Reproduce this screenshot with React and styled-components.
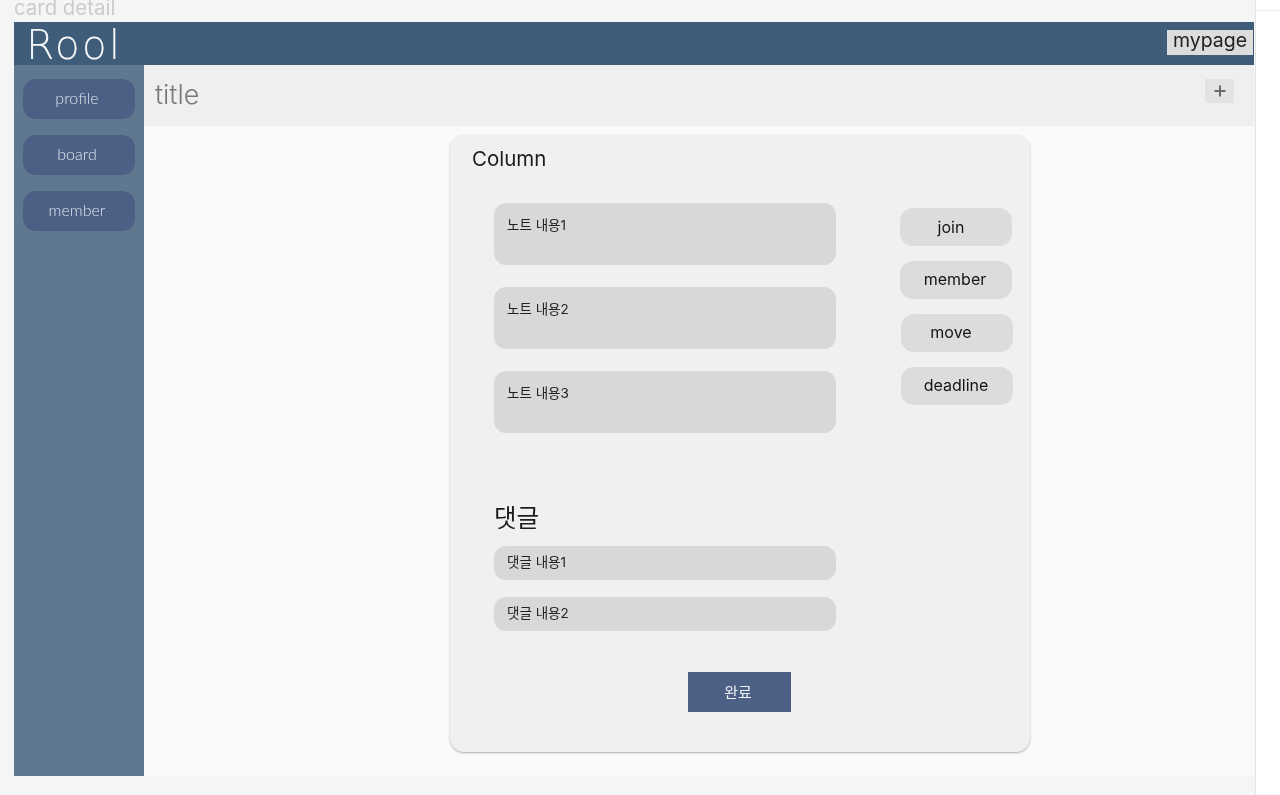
import React from "react";
import styled, { createGlobalStyle } from "styled-components";

const GlobalStyle = createGlobalStyle`
  html, body {
    margin: 0;
    padding: 0;
    height: 100%;
    overflow: hidden;
    background: #f5f5f5;
    font-family: Inter, "Noto Sans CJK KR", sans-serif;
  }
`;

// the reference is a soft, upscaled capture
const Page = styled.div`
  display: flex;
  width: 1280px;
  height: 795px;
  filter: blur(0.45px);
`;

const Canvas = styled.div`
  width: 1255px;
  padding-left: 14px;
  box-sizing: border-box;
  background: #f5f5f5;
`;

const Strip = styled.div`
  flex: 1;
  background: #fff;
  border-left: 1px solid #e4e4e4;
`;

const StripLine = styled.div`
  height: 10px;
  border-bottom: 1px solid #ececec;
`;

const FrameLabel = styled.div`
  height: 22px;
  font-size: 20.4px;
  line-height: 16px;
  color: #cbcbcb;
`;

const Frame = styled.div`
  width: 1240px;
  height: 754px;
  display: flex;
  flex-direction: column;
  background: #fafafa;
`;

const Header = styled.header`
  height: 43px;
  display: flex;
  align-items: center;
  justify-content: space-between;
  padding: 0 1px 0 12px;
  background: #3f5c78;
`;

const Logo = styled.div`
  padding-top: 3px;
  font-family: "DejaVu Sans", sans-serif;
  font-weight: 200;
  font-size: 41px;
  letter-spacing: 2px;
  line-height: 40px;
  color: #f4f6f8;
`;

const MyPage = styled.button`
  width: 86px;
  height: 25px;
  margin-bottom: 3px;
  padding: 0 0 4px;
  border: none;
  background: #dcdcdc;
  color: #222;
  font-family: Inter, sans-serif;
  font-size: 19.5px;
  line-height: 21px;
`;

const Body = styled.div`
  flex: 1;
  display: flex;
  min-height: 0;
`;

const Sidebar = styled.nav`
  width: 130px;
  display: flex;
  flex-direction: column;
  gap: 16px;
  padding: 14px 9px 0;
  box-sizing: border-box;
  background: #60788f;
`;

const SideButton = styled.div`
  height: 40px;
  padding: 0 4px 3px 0;
  box-sizing: border-box;
  display: flex;
  align-items: center;
  justify-content: center;
  border-radius: 13px;
  background: #4c5f85;
  color: #dfe4ec;
  font-family: Lato, sans-serif;
  font-weight: 300;
  font-size: 16px;
`;

const Main = styled.main`
  flex: 1;
  display: flex;
  flex-direction: column;
`;

const TitleBar = styled.div`
  height: 61px;
  display: flex;
  align-items: center;
  justify-content: space-between;
  padding: 0 20px 3px 11px;
  box-sizing: border-box;
  background: #efefef;
`;

const Title = styled.h1`
  margin: 0;
  font-size: 27px;
  font-weight: 300;
  color: #7a7a7a;
`;

const AddButton = styled.button`
  width: 29px;
  height: 24px;
  margin-bottom: 6px;
  padding: 0;
  border: none;
  display: flex;
  align-items: center;
  justify-content: center;
  background: #e3e3e3;
  color: #6a6a6a;
`;

const CardArea = styled.div`
  flex: 1;
  display: flex;
  padding: 9px 0 0 306px;
`;

const Card = styled.section`
  width: 580px;
  height: 617px;
  box-sizing: border-box;
  padding: 12px 17px 0 22px;
  border-radius: 14px;
  background: #f0f0f0;
  box-shadow: 0 1px 2px rgba(0, 0, 0, 0.3);
`;

const ColumnName = styled.div`
  font-size: 20.5px;
  line-height: 24px;
  color: #1c1c1c;
`;

const CardBody = styled.div`
  display: flex;
  justify-content: space-between;
  margin-top: 32px;
`;

const Left = styled.div`
  width: 342px;
  margin-left: 22px;
  display: flex;
  flex-direction: column;
`;

const Notes = styled.div`
  display: flex;
  flex-direction: column;
  gap: 22px;
`;

const Note = styled.div`
  height: 62px;
  box-sizing: border-box;
  padding: 12px 13px;
  border-radius: 12px;
  background: #d8d8d8;
  color: #222;
  font-size: 13.5px;
  line-height: 20px;
`;

const CommentHeading = styled.h2`
  margin: 67px 0 10px;
  font-size: 24.5px;
  font-weight: 400;
  line-height: 36px;
  color: #1c1c1c;
`;

const Comments = styled.div`
  display: flex;
  flex-direction: column;
  gap: 17px;
`;

const Comment = styled.div`
  height: 34px;
  display: flex;
  align-items: center;
  padding: 0 13px 4px;
  box-sizing: border-box;
  border-radius: 12px;
  background: #d8d8d8;
  color: #222;
  font-size: 13.5px;
`;

const DoneButton = styled.button`
  width: 103px;
  height: 40px;
  margin: 41px 0 0 194px;
  padding: 0 3px 2px 0;
  border: none;
  background: #4c5f85;
  color: #eef0f4;
  font-family: Inter, "Noto Sans CJK KR", sans-serif;
  font-size: 15px;
`;

const Actions = styled.div`
  display: flex;
  flex-direction: column;
  gap: 15px;
  padding-top: 5px;
`;

const ActionButton = styled.div`
  width: 112px;
  height: 38px;
  margin-left: ${(props) => props.$shift || 0}px;
  padding: 0 ${(props) => props.$textInset || 0}px ${(props) => props.$lift || 0}px 0;
  box-sizing: border-box;
  display: flex;
  align-items: center;
  justify-content: center;
  border-radius: 13px;
  background: #dcdcdc;
  color: #151515;
  font-size: 16px;
`;

const sideItems = ["profile", "board", "member"];
const notes = ["노트 내용1", "노트 내용2", "노트 내용3"];
const comments = ["댓글 내용1", "댓글 내용2"];
const actions = [
  { label: "join", shift: 0, inset: 10, lift: 1 },
  { label: "member", shift: 0, inset: 2, lift: 3 },
  { label: "move", shift: 1, inset: 12, lift: 3 },
  { label: "deadline", shift: 1, inset: 2, lift: 3 },
];

export default function App() {
  return (
    <Page>
      <GlobalStyle />
      <Canvas>
        <FrameLabel>card detail</FrameLabel>
        <Frame>
          <Header>
            <Logo>Rool</Logo>
            <MyPage>mypage</MyPage>
          </Header>
          <Body>
            <Sidebar>
              {sideItems.map((item) => (
                <SideButton key={item}>{item}</SideButton>
              ))}
            </Sidebar>
            <Main>
              <TitleBar>
                <Title>title</Title>
                <AddButton aria-label="add">
                  <svg width="14" height="14" viewBox="0 0 14 14">
                    <path d="M7 1.5v11M1.5 7h11" stroke="currentColor" strokeWidth="2" />
                  </svg>
                </AddButton>
              </TitleBar>
              <CardArea>
                <Card>
                  <ColumnName>Column</ColumnName>
                  <CardBody>
                    <Left>
                      <Notes>
                        {notes.map((note) => (
                          <Note key={note}>{note}</Note>
                        ))}
                      </Notes>
                      <CommentHeading>댓글</CommentHeading>
                      <Comments>
                        {comments.map((comment) => (
                          <Comment key={comment}>{comment}</Comment>
                        ))}
                      </Comments>
                      <DoneButton>완료</DoneButton>
                    </Left>
                    <Actions>
                      {actions.map((action) => (
                        <ActionButton
                          key={action.label}
                          $shift={action.shift}
                          $textInset={action.inset}
                          $lift={action.lift}
                        >
                          {action.label}
                        </ActionButton>
                      ))}
                    </Actions>
                  </CardBody>
                </Card>
              </CardArea>
            </Main>
          </Body>
        </Frame>
      </Canvas>
      <Strip>
        <StripLine />
      </Strip>
    </Page>
  );
}
